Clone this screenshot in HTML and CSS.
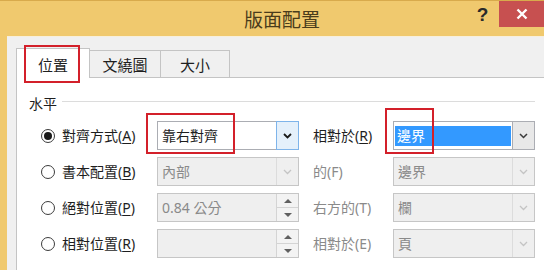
FILE: index.html
```html
<!DOCTYPE html>
<html lang="zh-Hant">
<head>
  <meta charset="UTF-8" />
  <title>版面配置</title>
  <link rel="stylesheet" href="styles.css">
</head>
<body>
  <div class="window">
    <div class="titlebar">
      <div class="title">版面配置</div>
      <div class="help">?</div>
      <div class="close">
        <svg width="12" height="12" viewBox="0 0 12 12"><path d="M1.5 1.5 L10.5 10.5 M10.5 1.5 L1.5 10.5" stroke="#fff" stroke-width="2.4" fill="none"/></svg>
      </div>
    </div>

    <div class="dialog">
      <div class="tabs">
        <div class="tab active">位置</div>
        <div class="tab">文繞圖</div>
        <div class="tab">大小</div>
      </div>

      <div class="panel">
        <div class="group-head">
          <span>水平</span>
          <span class="rule"></span>
        </div>

        <div class="rows">
          <!-- 對齊方式 -->
          <div class="opt"><span class="radio checked"></span><span>對齊方式(<u>A</u>)</span></div>
          <div class="combo">
            <span class="val">靠右對齊</span>
            <span class="drop hot"><svg width="9" height="6" viewBox="0 0 9 6"><path d="M1 1 L4.5 4.5 L8 1" stroke="#1a1a1a" stroke-width="1.8" fill="none"/></svg></span>
          </div>
          <div class="side">相對於(<u>R</u>)</div>
          <div class="combo">
            <span class="val"><span class="sel">邊界</span></span>
            <span class="drop grey"><svg width="9" height="6" viewBox="0 0 9 6"><path d="M1 1 L4.5 4.5 L8 1" stroke="#3a3a3a" stroke-width="1.5" fill="none"/></svg></span>
          </div>

          <!-- 書本配置 -->
          <div class="opt"><span class="radio"></span><span>書本配置(<u>B</u>)</span></div>
          <div class="combo off">
            <span class="val">內部</span>
            <span class="drop"><svg width="9" height="6" viewBox="0 0 9 6"><path d="M1 1 L4.5 4.5 L8 1" stroke="#c4c4c4" stroke-width="1.3" fill="none"/></svg></span>
          </div>
          <div class="side off">的(F)</div>
          <div class="combo off">
            <span class="val">邊界</span>
            <span class="drop"><svg width="9" height="6" viewBox="0 0 9 6"><path d="M1 1 L4.5 4.5 L8 1" stroke="#c4c4c4" stroke-width="1.3" fill="none"/></svg></span>
          </div>

          <!-- 絕對位置 -->
          <div class="opt"><span class="radio"></span><span>絕對位置(<u>P</u>)</span></div>
          <div class="combo off">
            <span class="val">0.84 公分</span>
            <span class="spin"><span class="up"></span><span class="down"></span></span>
          </div>
          <div class="side off">右方的(T)</div>
          <div class="combo off">
            <span class="val">欄</span>
            <span class="drop"><svg width="9" height="6" viewBox="0 0 9 6"><path d="M1 1 L4.5 4.5 L8 1" stroke="#c4c4c4" stroke-width="1.3" fill="none"/></svg></span>
          </div>

          <!-- 相對位置 -->
          <div class="opt"><span class="radio"></span><span>相對位置(<u>R</u>)</span></div>
          <div class="combo off">
            <span class="val"></span>
            <span class="spin"><span class="up"></span><span class="down"></span></span>
          </div>
          <div class="side off">相對於(E)</div>
          <div class="combo off">
            <span class="val">頁</span>
            <span class="drop"><svg width="9" height="6" viewBox="0 0 9 6"><path d="M1 1 L4.5 4.5 L8 1" stroke="#c4c4c4" stroke-width="1.3" fill="none"/></svg></span>
          </div>
        </div>
      </div>
    </div>

    <!-- red highlight boxes -->
    <div class="mark mark-tab"></div>
    <div class="mark mark-align"></div>
    <div class="mark mark-rel"></div>
  </div>
</body>
</html>
```

FILE: styles.css
```css
body {
  margin: 0;
  font-family: "Noto Sans", "Noto Sans CJK TC", sans-serif;
  font-size: 14px;
  color: #1e1e1e;
}

.window {
  position: relative;
  width: 544px;
  height: 270px;
  overflow: hidden;
  background-color: #f0c96e;
  border-top: 1px solid #d8aa4c;
  box-sizing: border-box;
  display: flex;
  flex-direction: column;
}

.titlebar {
  height: 35px;
  display: flex;
  align-items: flex-start;
}

.title {
  flex: 1;
  padding-left: 98px;
  text-align: center;
  font-family: "Noto Sans CJK TC", sans-serif;
  font-size: 19px;
  line-height: 36px;
  color: #4a3c1c;
}

.help {
  width: 33px;
  text-align: center;
  font-family: "Liberation Sans", sans-serif;
  font-weight: bold;
  font-size: 19px;
  line-height: 28px;
  color: #2a2a2a;
}

.close {
  width: 45px;
  height: 26px;
  background-color: #c75050;
  display: flex;
  align-items: center;
  justify-content: center;
}

.dialog {
  flex: 1;
  margin-left: 7px;
  background-color: #f0f0f0;
  border-top: 1px solid #f7efdc;
  padding: 11px 0 0 9px;
  display: flex;
  flex-direction: column;
}

.tabs {
  display: flex;
  align-items: flex-end;
  height: 30px;
  margin-bottom: -1px;
  position: relative;
  z-index: 1;
}

.tab {
  height: 27px;
  margin-bottom: 1px;
  box-sizing: border-box;
  border: 1px solid #c4c4c4;
  border-bottom: none;
  margin-left: -1px;
  display: flex;
  align-items: center;
  justify-content: center;
  font-family: "Noto Sans CJK TC", sans-serif;
  font-size: 15px;
  width: 72px;
}

.tab:nth-child(3) {
  width: 70px;
}

.tab.active {
  margin-left: 0;
  width: 74px;
  height: 30px;
  margin-bottom: 0;
  background-color: #fff;
  padding-top: 1px;
}

.panel {
  flex: 1;
  background-color: #fff;
  border-left: 1px solid #c4c4c4;
  border-top: 1px solid #c4c4c4;
  padding: 15px 0 0 12px;
}

.group-head {
  display: flex;
  align-items: center;
  gap: 5px;
  height: 20px;
  font-family: "Noto Sans CJK TC", sans-serif;
}

.rule {
  flex: 1;
  height: 1px;
  background-color: #dcdcdc;
  margin-right: 9px;
  margin-bottom: 3px;
}

.rows {
  margin: 8px 0 0 12px;
  display: grid;
  grid-template-columns: 116px 142px 94px 142px;
  grid-auto-rows: 29px;
  row-gap: 7px;
  align-items: center;
  line-height: 20px;
}

.opt {
  display: flex;
  align-items: center;
  gap: 7px;
  white-space: nowrap;
}

.radio {
  width: 14px;
  height: 14px;
  box-sizing: border-box;
  border: 1px solid #3c3c3c;
  border-radius: 50%;
  display: flex;
  align-items: center;
  justify-content: center;
}

.radio.checked::after {
  content: "";
  width: 8px;
  height: 8px;
  border-radius: 50%;
  background-color: #1a1a1a;
}

u {
  text-decoration-thickness: 1px;
  text-underline-offset: 2px;
}

.side {
  padding-left: 14px;
}

.side.off {
  color: #8a8a8a;
}

.combo {
  height: 29px;
  box-sizing: border-box;
  border: 1px solid #abadb3;
  background-color: #fff;
  display: flex;
}

.combo .val {
  flex: 1;
  padding-left: 4px;
  line-height: 27px;
  display: flex;
}

.combo .sel {
  flex: 1;
  margin: 4px 1px 3px -3px;
  padding-left: 2px;
  line-height: 20px;
  background-color: #3399ff;
  color: #fff;
}

.drop {
  width: 21px;
  display: flex;
  align-items: center;
  justify-content: center;
  border-left: 1px solid #d8d8d8;
}

.drop.hot {
  background-color: #e4f0fb;
  border: 1px solid #7eb4ea;
  margin: -1px -1px -1px 0;
}

.drop.grey {
  background-color: #e8e8e8;
  border-left: 1px solid #abadb3;
}

.combo.off {
  background-color: #efefef;
  border-color: #c6c6c6;
  color: #8a8a8a;
}

.combo.off .drop {
  border-left-color: #dcdcdc;
}

.spin {
  width: 21px;
  display: flex;
  flex-direction: column;
  border-left: 1px solid #d4d4d4;
}

.spin .up,
.spin .down {
  flex: 1;
  display: flex;
  align-items: center;
  justify-content: center;
  background-color: #f3f3f3;
}

.spin .up {
  border-bottom: 1px solid #d4d4d4;
}

.spin .up::after {
  content: "";
  border-left: 4px solid transparent;
  border-right: 4px solid transparent;
  border-bottom: 4px solid #606060;
}

.spin .down::after {
  content: "";
  border-left: 4px solid transparent;
  border-right: 4px solid transparent;
  border-top: 4px solid #606060;
}

.mark {
  position: absolute;
  border: 2px solid #d3202a;
  box-sizing: border-box;
  z-index: 2;
}

.mark-tab {
  left: 24px;
  top: 44px;
  width: 56px;
  height: 38px;
}

.mark-align {
  left: 146px;
  top: 112px;
  width: 89px;
  height: 41px;
}

.mark-rel {
  left: 385px;
  top: 107px;
  width: 49px;
  height: 46px;
}
```
